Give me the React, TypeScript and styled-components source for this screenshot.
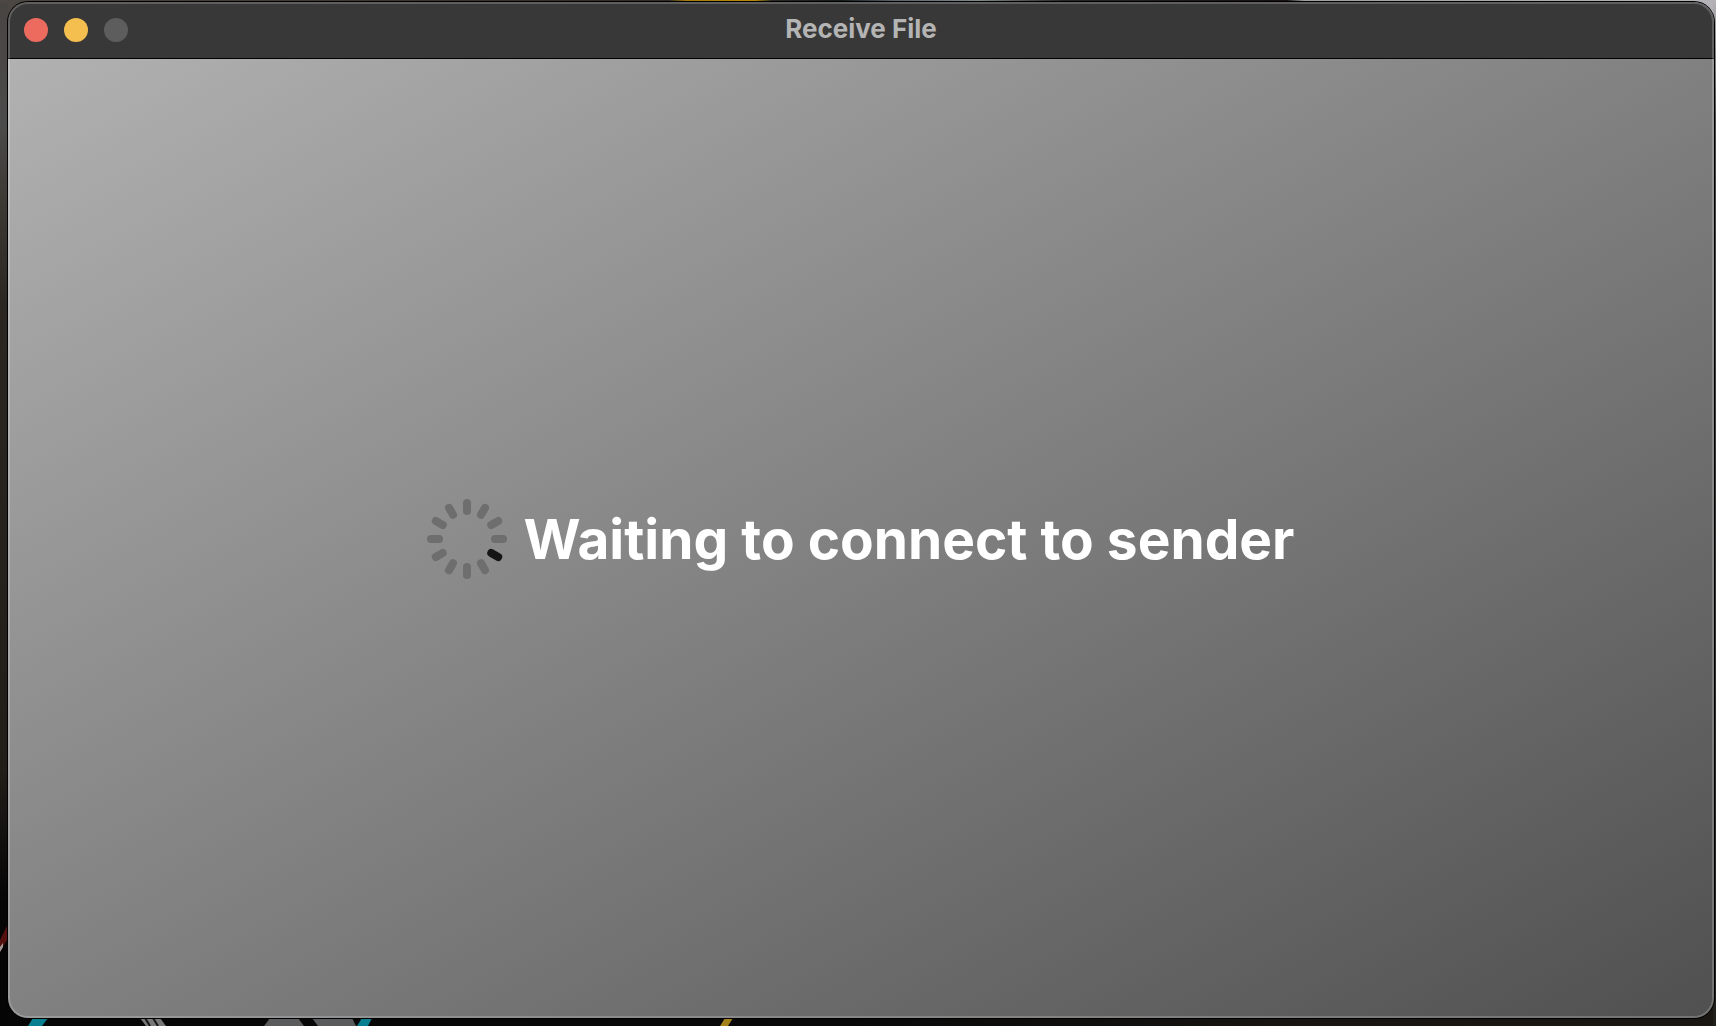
import React from "react";
import styled, { createGlobalStyle } from "styled-components";

const GlobalStyle = createGlobalStyle`
  * { box-sizing: border-box; }
  body { margin: 0; background: #0b0a09; }
`;

const Desktop = styled.div`
  position: relative;
  display: flex;
  min-height: 100vh;
  padding: 2px 2px 8px 8px;
  font-family: Inter, "Liberation Sans", sans-serif;
  background:
    linear-gradient(to right, #4d4744 0%, #332c24 39%, #a87c08 40%, #b88909 44%, #2c2a24 45%, #141a1c 49%, #56636a 52%, #7e8889 57%, #2a2626 62%, #17120f 75%, #a0a09c 76%, #b4b2b6 100%) top / 100% 3px no-repeat,
    linear-gradient(to bottom, #484441 0%, #4c4b4b 12%, #403c38 18%, #2b2621 30%, #211d18 75%, #050506 88%, #050506 100%) left / 8px 100% no-repeat,
    linear-gradient(to bottom, #b4b2b6 0%, #4a4844 12%, #221e1a 100%) right / 3px 100% no-repeat,
    linear-gradient(to left, #b4b2b6 0%, #b4b2b6 100%) right top / 20px 20px no-repeat,
    linear-gradient(to right, #4d4744 0%, #4d4744 100%) left top / 28px 20px no-repeat,
    linear-gradient(to right, #060606 0%, #080808 50%, #171411 75%, #1a1713 100%);
`;

const Wallpaper = styled.svg`
  position: absolute;
  left: 0;
  bottom: 0;
  width: 740px;
  height: 110px;
`;

const Window = styled.main`
  position: relative;
  flex: 1;
  display: flex;
  flex-direction: column;
  overflow: hidden;
  border-radius: 20px;
  box-shadow: 0 0 0 1px #000;

  &::after {
    content: "";
    position: absolute;
    inset: 0;
    border: 2px solid rgba(255, 255, 255, 0.2);
    border-radius: inherit;
    pointer-events: none;
  }
`;

const TitleBar = styled.header`
  display: grid;
  grid-template-columns: 1fr auto 1fr;
  align-items: center;
  height: 57px;
  padding: 0 16px;
  background: #383838;
  border-bottom: 1px solid #000;
`;

const Controls = styled.div`
  display: flex;
  gap: 16px;
`;

const Light = styled.button<{ $color: string }>`
  width: 24px;
  height: 24px;
  padding: 0;
  border: 0;
  border-radius: 50%;
  background: ${(p) => p.$color};
`;

const Title = styled.h1`
  margin: 0;
  padding-bottom: 2px;
  font-size: 26px;
  line-height: 32px;
  font-weight: 700;
  color: #b4b4b4;
`;

const Content = styled.section`
  flex: 1;
  display: flex;
  align-items: center;
  justify-content: center;
  gap: 16px;
  background: linear-gradient(to bottom right, #b1b1b1, #505050);
`;

const Spinner = styled.svg`
  flex: none;
  width: 80px;
  height: 80px;
`;

const Status = styled.p`
  margin: 0;
  font-size: 55px;
  line-height: 64px;
  font-weight: 700;
  color: #fff;
`;

const spokes = Array.from({ length: 12 }, (_, i) => i * 30);
const activeAngle = 120;

export default function App() {
  return (
    <>
      <GlobalStyle />
      <Desktop>
        <Wallpaper viewBox="0 0 740 110" aria-hidden="true">
          <path d="M0 24L7 10V24L0 36Z" fill="#54100f" />
          <path d="M0 31L3 27V31L0 36Z" fill="#a09a98" />
          <path d="M28 110L33 102H48L42 110Z" fill="#087f91" />
          <path d="M140 102H160L166 110H146Z" fill="#777" />
          <path d="M145 102L150 110M153 102L158 110" stroke="#171717" strokeWidth="2" />
          <path d="M264 110L270 102H352L356 110Z" fill="#5a5b5d" />
          <path d="M298 102L304 110H318L312 102Z" fill="#080808" />
          <path d="M357 110L362 102H372L368 110Z" fill="#087f91" />
          <path d="M720 110L725 102H733L728 110Z" fill="#a48119" />
        </Wallpaper>
        <Window>
          <TitleBar>
            <Controls>
              <Light $color="#ed6a5e" aria-label="Close" />
              <Light $color="#f5bf4f" aria-label="Minimize" />
              <Light $color="#5d5d5d" aria-label="Zoom" disabled />
            </Controls>
            <Title>Receive File</Title>
          </TitleBar>
          <Content>
            <Spinner viewBox="-40 -40 80 80" aria-hidden="true">
              {spokes.map((angle) => (
                <line
                  key={angle}
                  y1={-28}
                  y2={-36}
                  transform={`rotate(${angle})`}
                  stroke={angle === activeAngle ? "#151515" : "#6e6e6e"}
                  strokeWidth="8"
                  strokeLinecap="round"
                />
              ))}
            </Spinner>
            <Status role="status">Waiting to connect to sender</Status>
          </Content>
        </Window>
      </Desktop>
    </>
  );
}
